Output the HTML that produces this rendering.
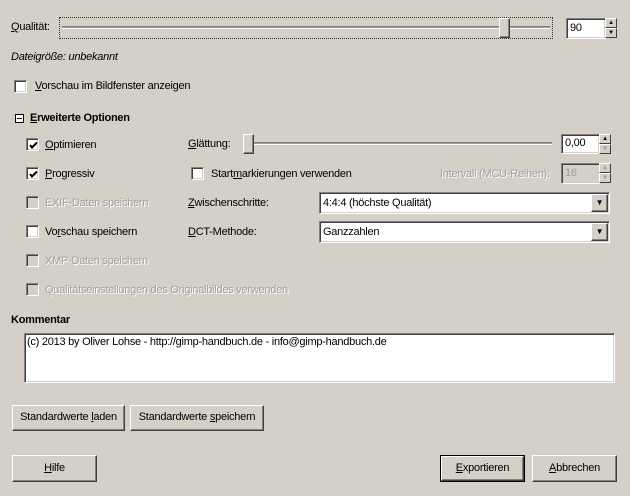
<!DOCTYPE html>
<html><head><meta charset="utf-8"><style>
*{box-sizing:border-box}
body{margin:0;width:630px;height:496px;background:#d4d0c8;font-family:"Liberation Sans",sans-serif;font-size:11px;letter-spacing:-0.25px;color:#000;position:relative;overflow:hidden}
.a{position:absolute;white-space:nowrap;line-height:13px}
.dis{color:#a0a0a0;text-shadow:1px 1px #fff}
.cb{position:absolute;width:13px;height:13px;background:#fff;border:1px solid;border-color:#808080 #fff #fff #808080;box-shadow:inset 1px 1px #404040,inset -1px -1px #d4d0c8}
.cb.d{background:#d4d0c8}
.cb svg{position:absolute;left:2px;top:2px}
.sunk{position:absolute;background:#fff;border:1px solid;border-color:#808080 #fff #fff #808080;box-shadow:inset 1px 1px #404040,inset -1px -1px #d4d0c8}
.btn{position:absolute;background:#d4d0c8;border:1px solid;border-color:#fff #404040 #404040 #fff;box-shadow:inset -1px -1px #808080;text-align:center}
.thumb{position:absolute;width:11px;height:20px;background:#d4d0c8;border:1px solid;border-color:#fff #404040 #404040 #fff;box-shadow:inset -1px -1px #808080}
.track{position:absolute;height:3px;border-top:1px solid #808080;border-bottom:1px solid #fff;background:#a09c94}
.arr{position:absolute;width:12px;height:10px;background:#d4d0c8;border:1px solid;border-color:#fff #404040 #404040 #fff;font-size:6px;text-align:center;line-height:8px}
u{text-decoration:underline}
</style></head><body>
<div class="a" style="left:11px;top:21px"><u>Q</u>ualität:</div>
<div style="position:absolute;left:59px;top:17px;width:494px;height:22px;border:1px dotted #333"></div>
<div class="track" style="left:62px;top:26px;width:488px"></div>
<div class="thumb" style="left:499px;top:18px"></div>
<div class="sunk" style="left:566px;top:18px;width:40px;height:21px;padding:3px 3px">90</div>
<div class="arr" style="left:605px;top:18px">▲</div><div class="arr" style="left:605px;top:28px">▼</div>
<div class="a" style="left:11px;top:51px;font-style:italic">Dateigröße: unbekannt</div>
<div class="cb" style="left:14px;top:80px"></div>
<div class="a" style="left:35px;top:80px"><u>V</u>orschau im Bildfenster anzeigen</div>
<div style="position:absolute;left:15px;top:114px;width:9px;height:9px;border:1px solid #000;background:#fff"><div style="position:absolute;left:1px;top:3px;width:5px;height:1px;background:#000"></div></div>
<div class="a" style="left:30px;top:112px;font-weight:bold"><u>E</u>rweiterte Optionen</div>

<div class="cb" style="left:26px;top:138px"><svg width="9" height="9"><path d="M1 4 L3 6.5 L8 1.5" stroke="#000" stroke-width="2" fill="none"/></svg></div>
<div class="a" style="left:45px;top:139px"><u>O</u>ptimieren</div>
<div class="cb" style="left:26px;top:167px"><svg width="9" height="9"><path d="M1 4 L3 6.5 L8 1.5" stroke="#000" stroke-width="2" fill="none"/></svg></div>
<div class="a" style="left:45px;top:168px"><u>P</u>rogressiv</div>
<div class="cb d" style="left:26px;top:196px"></div>
<div class="a dis" style="left:45px;top:197px">EXIF-Daten speichern</div>
<div class="cb" style="left:26px;top:225px"></div>
<div class="a" style="left:45px;top:226px">Vo<u>r</u>schau speichern</div>
<div class="cb d" style="left:26px;top:254px"></div>
<div class="a dis" style="left:45px;top:255px">XMP-Daten speichern</div>
<div class="cb d" style="left:26px;top:283px"></div>
<div class="a dis" style="left:45px;top:284px">Qualitätseinstellungen des Originalbildes verwenden</div>

<div class="a" style="left:188px;top:138px"><u>G</u>lättung:</div>
<div class="track" style="left:245px;top:142px;width:307px"></div>
<div class="thumb" style="left:243px;top:134px"></div>
<div class="sunk" style="left:561px;top:134px;width:39px;height:20px;padding:2px 3px">0,00</div>
<div class="arr" style="left:599px;top:134px">▲</div><div class="arr" style="left:599px;top:144px;color:#999">▼</div>

<div class="cb" style="left:191px;top:167px"></div>
<div class="a" style="left:211px;top:168px">Start<u>m</u>arkierungen verwenden</div>
<div class="a dis" style="left:440px;top:168px">Intervall (MCU-Reihen):</div>
<div class="sunk" style="left:561px;top:163px;width:39px;height:21px;padding:3px 3px;background:#d4d0c8;color:#a0a0a0">16</div>
<div class="arr" style="left:599px;top:163px;color:#999">▲</div><div class="arr" style="left:599px;top:173px;color:#999">▼</div>

<div class="a" style="left:188px;top:197px"><u>Z</u>wischenschritte:</div>
<div class="sunk" style="left:319px;top:192px;width:291px;height:22px;padding:4px 3px">4:4:4 (höchste Qualität)</div>
<div class="btn" style="left:591px;top:194px;width:17px;height:18px;font-size:8px;line-height:16px">▼</div>
<div class="a" style="left:188px;top:226px"><u>D</u>CT-Methode:</div>
<div class="sunk" style="left:319px;top:221px;width:291px;height:22px;padding:4px 3px">Ganzzahlen</div>
<div class="btn" style="left:591px;top:223px;width:17px;height:18px;font-size:8px;line-height:16px">▼</div>

<div class="a" style="left:11px;top:314px;font-weight:bold">Kommentar</div>
<div class="sunk" style="left:24px;top:333px;width:591px;height:50px;padding:2px 2px">(c) 2013 by Oliver Lohse - http://gimp-handbuch.de - info@gimp-handbuch.de</div>

<div class="btn" style="left:12px;top:405px;width:113px;height:26px;line-height:23px">Standardwerte <u>l</u>aden</div>
<div class="btn" style="left:130px;top:405px;width:134px;height:26px;line-height:23px">Standardwerte <u>s</u>peichern</div>
<div class="btn" style="left:12px;top:455px;width:85px;height:27px;line-height:24px"><u>H</u>ilfe</div>
<div style="position:absolute;left:440px;top:455px;width:85px;height:27px;border:1px solid #000"></div>
<div class="btn" style="left:441px;top:456px;width:83px;height:25px;line-height:22px"><u>E</u>xportieren</div>
<div class="btn" style="left:532px;top:455px;width:85px;height:27px;line-height:24px"><u>A</u>bbrechen</div>
</body></html>
